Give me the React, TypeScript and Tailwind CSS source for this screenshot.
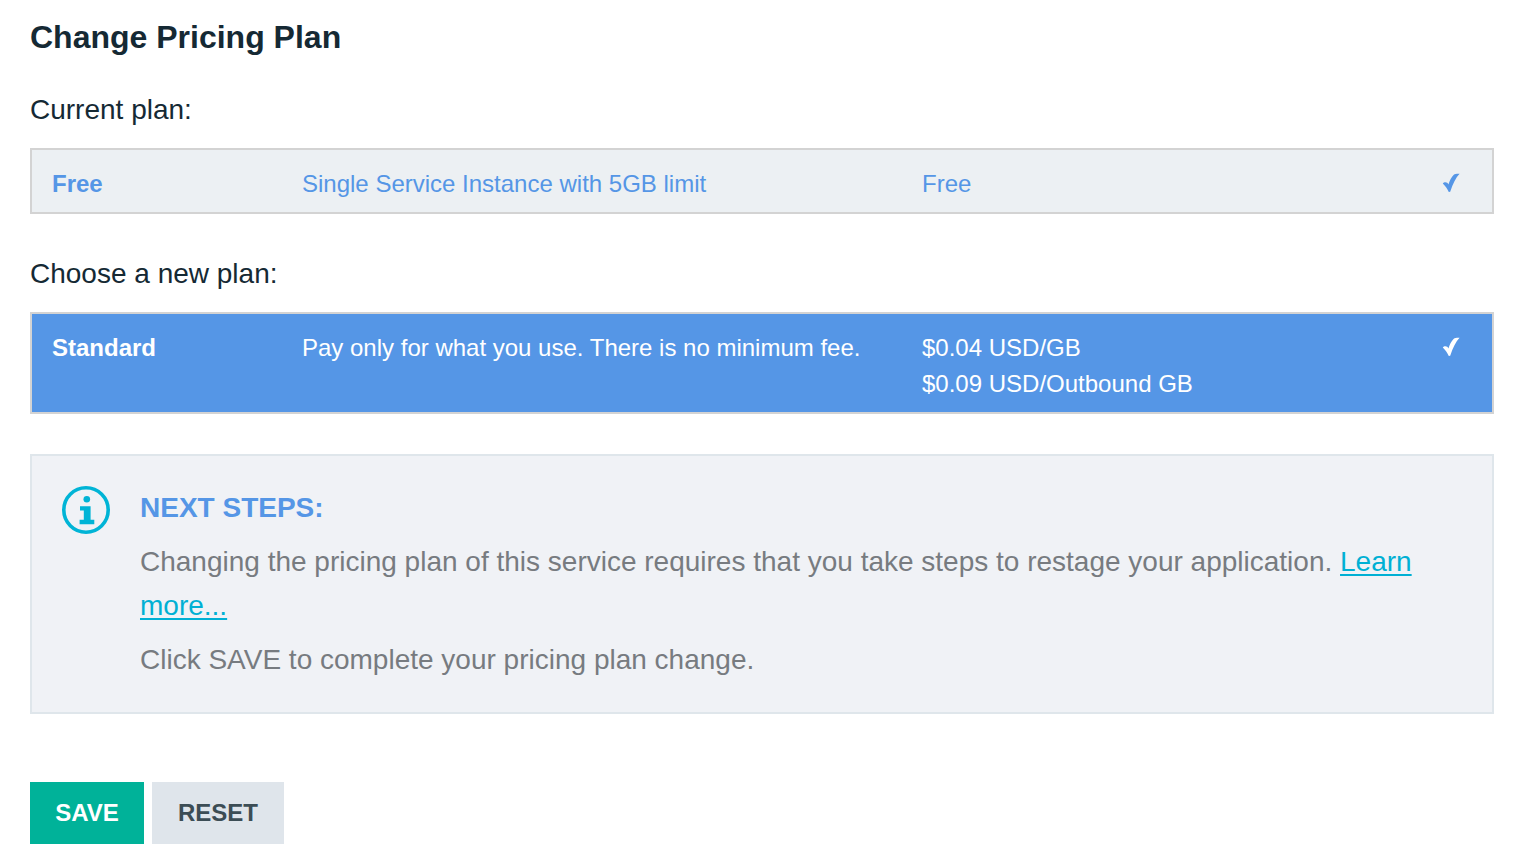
type Plan = {
  name: string;
  description: string;
  prices: string[];
};

const currentPlan: Plan = {
  name: 'Free',
  description: 'Single Service Instance with 5GB limit',
  prices: ['Free'],
};

const newPlan: Plan = {
  name: 'Standard',
  description: 'Pay only for what you use. There is no minimum fee.',
  prices: ['$0.04 USD/GB', '$0.09 USD/Outbound GB'],
};

function CheckMark() {
  return (
    <svg viewBox="0 0 18 20" className="ml-auto h-5 w-[18px]" fill="currentColor" role="img" aria-label="Selected">
      <path d="M.8 10.4 C1.6 9.2 4 8.8 5.2 9.8 C5.8 10.3 6.1 11 6.4 11.6 C7.6 7.6 9.4 4 11.8 1.8 C12.8 .9 15.4 .6 17.6 .8 C13.8 4.8 10.9 10.6 8.2 18.8 L6.8 19 C5.4 15.8 3.4 12.8 .8 10.4 Z" />
    </svg>
  );
}

function InfoIcon() {
  return (
    <svg viewBox="0 0 48 48" className="size-12 shrink-0 text-[#00b4d6]" aria-hidden="true">
      <circle cx="24" cy="24" r="22.2" fill="none" stroke="currentColor" strokeWidth="3.6" />
      <circle cx="24.8" cy="13.2" r="3.3" fill="currentColor" />
      <path d="M18 20.2 H28.6 V33.8 H32.3 V38.2 H17.6 V33.8 H21.8 V24.6 H18 Z" fill="currentColor" />
    </svg>
  );
}

function PlanTable({ plan, labelId, className }: { plan: Plan; labelId: string; className: string }) {
  return (
    <div className={`border-2 border-[#d3d3d3] px-5 pt-4 pb-[10px] text-2xl leading-9 ${className}`}>
      <table className="w-full table-fixed text-left" aria-labelledby={labelId}>
        <colgroup>
          <col className="w-[250px]" />
          <col className="w-[620px]" />
          <col />
          <col className="w-[31px]" />
        </colgroup>
        <tbody>
          <tr className="align-top">
            <th scope="row" className="font-bold">{plan.name}</th>
            <td>{plan.description}</td>
            <td>
              {plan.prices.map((price) => (
                <div key={price}>{price}</div>
              ))}
            </td>
            <td className="pt-[7px] pr-3">
              <CheckMark />
            </td>
          </tr>
        </tbody>
      </table>
    </div>
  );
}

export default function App() {
  return (
    <main className="bg-white px-[30px] pt-[15px] pb-5 font-['Helvetica_Neue','Liberation_Sans',Arial,sans-serif] text-[28px] leading-[44px] text-[#152934]">
      <h1 className="text-[32px] leading-[44px] font-bold">Change Pricing Plan</h1>

      <section className="mt-[29px]">
        <h2 id="current-plan" className="mb-4">Current plan:</h2>
        <PlanTable plan={currentPlan} labelId="current-plan" className="bg-[#ecf0f3] text-[#5596e6]" />
      </section>

      <section className="mt-[38px]">
        <h2 id="new-plan" className="mb-4">Choose a new plan:</h2>
        <PlanTable plan={newPlan} labelId="new-plan" className="bg-[#5596e6] text-white" />
      </section>

      <section className="mt-10 flex gap-[30px] border-2 border-[#dfe6eb] bg-[#f0f2f6] p-[30px]">
        <InfoIcon />
        <div className="flex flex-1 flex-col gap-[10px] text-[#777b80]">
          <h2 className="font-bold text-[#5596e6]">NEXT STEPS:</h2>
          <p>
            Changing the pricing plan of this service requires that you take steps to restage your application.{' '}
            <a href="#learn-more" className="text-[#00b0d4] underline decoration-2 underline-offset-3">
              Learn more...
            </a>
          </p>
          <p>Click SAVE to complete your pricing plan change.</p>
        </div>
      </section>

      <div className="mt-[68px] flex gap-2 text-2xl font-bold">
        <button type="button" className="h-[62px] min-w-[114px] bg-[#00b299] px-5 text-white">SAVE</button>
        <button type="button" className="h-[62px] min-w-[132px] bg-[#dfe5eb] px-5 text-[#3c4d55]">RESET</button>
      </div>
    </main>
  );
}
